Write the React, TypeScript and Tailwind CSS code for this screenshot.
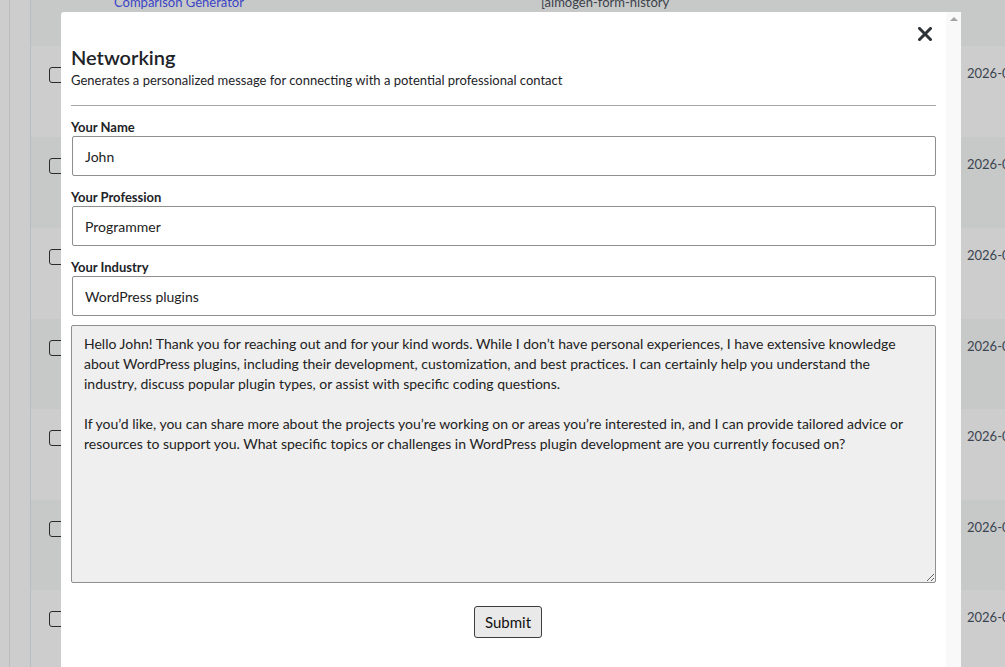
const rows = [
  { h: "h-[91px]", bg: "bg-[#cdcdcd]" },
  { h: "h-[91px]", bg: "bg-[#c7c8c8]" },
  { h: "h-[91px]", bg: "bg-[#cdcdcd]" },
  { h: "h-[90px]", bg: "bg-[#c7c8c8]" },
  { h: "h-[91px]", bg: "bg-[#cdcdcd]" },
  { h: "h-[90px]", bg: "bg-[#c7c8c8]" },
  { h: "h-[91px]", bg: "bg-[#cdcdcd]" },
];

const reply = `Hello John! Thank you for reaching out and for your kind words. While I don’t have personal experiences, I have extensive knowledge
about WordPress plugins, including their development, customization, and best practices. I can certainly help you understand the
industry, discuss popular plugin types, or assist with specific coding questions.

If you’d like, you can share more about the projects you’re working on or areas you’re interested in, and I can provide tailored advice or
resources to support you. What specific topics or challenges in WordPress plugin development are you currently focused on?`;

const fields = [
  { label: "Your Name", value: "John" },
  { label: "Your Profession", value: "Programmer" },
  { label: "Your Industry", value: "WordPress plugins" },
];

const App = () => {
  return (
    <div className="relative h-[667px] w-[1005px] overflow-hidden bg-[#cdcdcd] font-['Lato','Noto_Sans',sans-serif] text-[13px] text-[#1d2327]">
      {/* admin list behind the overlay */}
      <div className="flex h-full">
        <div className="w-[10px] shrink-0 border-r border-[#bdbdbd]" />
        <div className="w-[21px] shrink-0 border-r border-[#b5bdc6]" />
        <div className="flex min-w-0 flex-1 flex-col overflow-hidden">
          <div className="flex h-[46px] shrink-0 bg-[#c7c8c8] leading-[18px]">
            <span className="ml-[83px] mt-[-7px] w-[427px] shrink-0 text-[#3a45c6]">Comparison Generator</span>
            <span className="mt-[-7px] whitespace-nowrap text-[#3b4248]">[aimogen-form-history</span>
          </div>
          {rows.map((row, i) => (
            <div key={i} className={`flex shrink-0 pl-[18px] ${row.h} ${row.bg}`}>
              <div className="w-[918px] shrink-0 pt-[21px]">
                <div className="h-[16px] w-[16px] rounded-[3px] border border-[#2a2a2a]" />
              </div>
              <div className="whitespace-nowrap pt-[18px] leading-[18px] text-[#3b4450]">2026-01-14</div>
            </div>
          ))}
        </div>
      </div>

      {/* modal */}
      <div className="absolute bottom-0 left-[61px] top-[12px] flex w-[900px] rounded-t-[3px] bg-white">
        <div className="flex min-w-0 flex-1 flex-col px-[10px] pt-[15px]">
          <div className="flex h-[14px] justify-end pr-[4px]">
            <svg width="14" height="14" viewBox="0 0 14 14" className="text-[#2c3338]">
              <path d="M1.5 1.5 L12.5 12.5 M12.5 1.5 L1.5 12.5" stroke="currentColor" strokeWidth="3" strokeLinecap="square" />
            </svg>
          </div>
          <h2 className="mt-[2px] text-[20px] font-semibold leading-[28px]">Networking</h2>
          <p className="leading-[18px]">Generates a personalized message for connecting with a potential professional contact</p>
          <div className="mt-[16px] border-t border-[#a7a7a7]" />

          {fields.map((f, i) => (
            <div key={i} className="mt-[12px] flex flex-col">
              <label className="font-bold leading-[18px]">{f.label}</label>
              <input
                readOnly
                value={f.value}
                className="ml-[1px] h-[40px] rounded-[2px] border border-[#8f8f8f] bg-white px-[12px] text-[14px] text-[#222] outline-none"
              />
            </div>
          ))}

          <textarea
            readOnly
            value={reply}
            className="mt-[9px] h-[258px] w-full rounded-[2px] border border-[#8f8f8f] bg-[#efefef] px-[12px] pt-[8px] text-[14px] leading-[20px] text-[#222] outline-none"
          />

          <div className="mt-[23px] flex justify-center pl-[9px]">
            <button className="h-[32px] w-[68px] rounded-[3px] border border-[#3d3d3d] bg-[#e9e9e9] text-[15px] text-[#111]">
              Submit
            </button>
          </div>
        </div>

        {/* scrollbar */}
        <div className="flex w-[15px] shrink-0 justify-center bg-[#f9f9f9] pt-[5px]">
          <div className="h-0 w-0 border-x-[4px] border-b-[4px] border-x-transparent border-b-[#a3a3a3]" />
        </div>
      </div>
    </div>
  );
};

export default App;
